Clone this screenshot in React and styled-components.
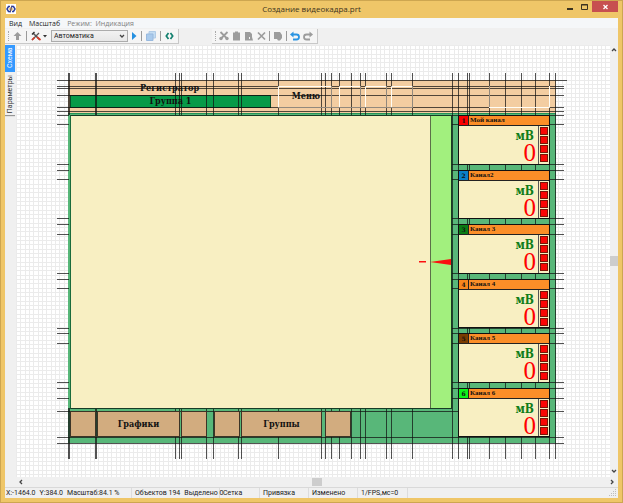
import React from "react";
import styled, { createGlobalStyle } from "styled-components";

const GlobalStyle = createGlobalStyle`
  * { box-sizing: border-box; }
  html, body, #root { height: 100%; margin: 0; }
  body { font: 7px/10px "Open Sans", "Noto Sans", sans-serif; color: #1c1c1c; overflow: hidden; }
  button, select { font: inherit; color: inherit; border: 0; padding: 0; margin: 0; background: none; }
  h1, h2 { margin: 0; font: inherit; }
`;

const Window = styled.div`
  height: 100%;
  display: flex;
  flex-direction: column;
  background: #efc668;
  border: 1px solid #cda650;
  padding: 0 4px 4px;
`;
const TitleBar = styled.header`
  flex: none;
  height: 17px;
  display: grid;
  grid-template-columns: 1fr auto 1fr;
`;
const Title = styled.h1`
  font-size: 8px;
  line-height: 16px;
  color: #3c3320;
`;
const AppIcon = styled.svg`
  width: 10px;
  height: 10px;
  margin: 3px 0 0 1px;
`;
const WindowButtons = styled.div`
  display: flex;
  justify-content: flex-end;
  align-items: flex-start;
`;
const WindowButton = styled.button`
  width: ${(p) => (p.$close ? 26 : 15)}px;
  height: 11px;
  background: ${(p) => (p.$close ? "#c75050" : "transparent")};
  svg { display: block; margin: 0 auto; }
`;
const Client = styled.main`
  flex: 1;
  min-height: 0;
  display: flex;
  flex-direction: column;
  background: #f0f0f0;
`;
const MenuBar = styled.nav`
  flex: none;
  height: 10px;
  display: flex;
  gap: 7px;
  padding: 0 4px;
  background: #f5f7f9;
`;
const MenuItem = styled.button`
  line-height: 11px;
  white-space: pre;
  &:disabled { color: #808080; }
`;
const ToolRow = styled.div`
  flex: none;
  height: 17px;
  display: flex;
  align-items: center;
  gap: 33px;
  padding-bottom: 1px;
`;
const Toolbar = styled.div`
  height: 15px;
  display: flex;
  align-items: center;
  gap: ${(p) => (p.$wide ? 4 : 3)}px;
  padding: 0 4px 0 3px;
  background: #f5f5f5;
  border-right: 1px solid #c8c8c8;
  border-bottom: 1px solid #c8c8c8;
  &::before { content: ""; height: 10px; border-left: 1px dotted #aaa; }
`;
const Divider = styled.span`
  height: 10px;
  border-left: 1px solid #9a9a9a;
`;
const Tool = styled.button`
  display: flex;
  color: ${(p) => p.$color || "#9c9c9c"};
`;
const ModeSelect = styled.select`
  width: 77px;
  height: 12px;
  appearance: none;
  border: 1px solid #acacac;
  padding: 0 2px;
  color: #222;
  font-family: Roboto, sans-serif;
  line-height: 10px;
  background: linear-gradient(#f2f2f2, #e7e7e7);
`;
const SelectBox = styled.label`
  display: flex;
  align-items: center;
  svg { margin-left: -9px; margin-right: 2px; pointer-events: none; }
`;
const Work = styled.div`
  flex: 1;
  min-height: 0;
  display: grid;
  grid-template-columns: 11px 1fr 8px;
  grid-template-rows: 1fr 10px;
`;
const SideTabs = styled.div`
  display: flex;
  flex-direction: column;
  align-items: flex-start;
  gap: 1px;
`;
const SideTab = styled.button`
  writing-mode: vertical-rl;
  transform: rotate(180deg);
  width: 10px;
  line-height: 9px;
  padding: 2px 0;
  font-family: Roboto, sans-serif;
  color: ${(p) => (p.$active ? "#fff" : "#333")};
  min-height: ${(p) => (p.$active ? 27 : 36)}px;
  text-align: center;
  background: ${(p) => (p.$active ? "#3399ff" : "#f0f0f0")};
  border-top: 1px solid ${(p) => (p.$active ? "#3399ff" : "#888")};
`;
const Canvas = styled.div`
  overflow: hidden;
  background-color: #fff;
  background-image:
    linear-gradient(90deg, #ebebeb 1px, transparent 1px 4px, #ebebeb 4px 5px, transparent 5px 9px, #ebebeb 9px 10px, transparent 10px),
    linear-gradient(#ebebeb 1px, transparent 1px 4px, #ebebeb 4px 5px, transparent 5px 9px, #ebebeb 9px 10px, transparent 10px);
  background-size: 13px 13px;
  padding: 27px 0 0 40px;
`;
const VScroll = styled.div`
  display: flex;
  flex-direction: column;
  align-items: center;
  justify-content: space-between;
  padding: 2px 0 3px;
`;
const HScroll = styled.div`
  grid-column: 2 / 4;
  display: flex;
  align-items: center;
  justify-content: space-between;
  padding: 0 3px 0 2px;
`;
const Thumb = styled.span`
  width: ${(p) => (p.$vertical ? 8 : 10)}px;
  height: ${(p) => (p.$vertical ? 10 : 8)}px;
  background: #cdcdcd;
`;
const StatusBar = styled.footer`
  flex: none;
  height: 11px;
  display: flex;
  border-top: 1px solid #d9d9d9;
  font-family: Roboto, sans-serif;
  svg { margin: 1px 1px 0 auto; }
`;
const Status = styled.span`
  width: ${(p) => p.$w}px;
  white-space: pre;
  border-right: 1px solid #dcdcdc;
  padding-left: ${(p) => (p.$first ? 1 : 3)}px;
  display: flex;
  gap: 4px;
`;

const Stage = styled.div`
  position: relative;
  width: 512px;
  padding: 8px 12px 16px;
  font-family: "DejaVu Serif", "Noto Serif", serif;
  font-weight: bold;
  color: #111;
`;
const Guides = styled.svg`
  position: absolute;
  inset: 0;
  z-index: 1;
  pointer-events: none;
`;
const Scheme = styled.div`
  width: 488px;
  background: #58b779;
`;
const SchemeHeader = styled.div`
  height: 34px;
  display: grid;
  grid-template-columns: 203px 70px;
  background: #f3cda1;
  border-bottom: 1px solid #24945a;
  font-family: "DejaVu Serif Condensed", "DejaVu Serif", serif;
  font-size: 9px;
  text-align: center;
`;
const Recorder = styled.div`
  height: 15px;
  padding-top: 2px;
  line-height: 12px;
`;
const GroupName = styled.div`
  margin-left: 2px;
  height: 13px;
  line-height: 11px;
  background: #079a48;
  border: 1px solid #064f27;
`;
const MenuLabel = styled.div`
  line-height: 33px;
`;
const Body = styled.div`
  position: relative;
  z-index: 2;
  display: grid;
  grid-template-columns: 382px 92px;
  gap: 6px;
  padding: 1px 0 6px 2px;
`;
const Left = styled.div`
  display: flex;
  flex-direction: column;
  gap: 2px;
`;
const Chart = styled.div`
  height: 294px;
  display: grid;
  grid-template-columns: 1fr 21px;
  background: #f8efc2;
  border: 1px solid #173c25;
  border-left-color: #1b6b3b;
`;
const Scale = styled.div`
  background: #a2f07e;
  border-left: 1px solid #5c7048;
  display: flex;
  align-items: center;
  justify-content: flex-end;
  svg { flex: none; }
`;
const Buttons = styled.div`
  display: flex;
`;
const PanelButton = styled.button`
  height: 26px;
  width: ${(p) => p.$w}px;
  margin-right: ${(p) => p.$gap || 0}px;
  font: bold 9px/12px "DejaVu Serif Condensed", "DejaVu Serif", serif;
  background: #d2ac7f;
  border: 1px solid #3c3426;
`;
const Channels = styled.div`
  display: grid;
  grid-template-rows: repeat(6, 1fr);
  gap: 5px;
`;
const Card = styled.section`
  display: grid;
  grid-template-rows: 10px 1fr;
  border: 1px solid #111;
  background: #f8efc2;
`;
const CardHead = styled.div`
  display: grid;
  grid-template-columns: 10px 1fr;
  background: #fb8e28;
  border-bottom: 1px solid #222;
  font-size: 6px;
  line-height: 9px;
`;
const Index = styled.span`
  background: ${(p) => p.$color};
  border-right: 1px solid #222;
  text-align: center;
`;
const ChannelName = styled.h2`
  padding-left: 1px;
  font-family: "Liberation Serif", serif;
  font-size: 7px;
  line-height: 9px;
  font-weight: bold;
`;
const CardBody = styled.div`
  display: grid;
  grid-template-columns: 1fr 11px;
`;
const Reading = styled.div`
  display: flex;
  flex-direction: column;
  align-items: flex-end;
  padding: 4px 2px 0 0;
`;
const Unit = styled.span`
  font: bold 12px/13px "DejaVu Serif Condensed", "DejaVu Serif", serif;
  color: #107c18;
  padding-right: 2px;
`;
const Value = styled.span`
  font: 25px/20px "Liberation Serif", serif;
  color: #ff0000;
`;
const Lamps = styled.div`
  border-left: 1px solid #555;
  display: flex;
  flex-direction: column;
  align-items: center;
  gap: 1px;
  padding-top: 1px;
`;
const Lamp = styled.span`
  width: 8px;
  height: 8px;
  background: #fb0505;
  border: 1px solid #7a1408;
`;

const channels = [
  { color: "#fb0000", name: "Мой канал" },
  { color: "#0a80c8", name: "Канал2" },
  { color: "#0a7c14", name: "Канал 3" },
  { color: "#f7861c", name: "Канал 4" },
  { color: "#7a3c00", name: "Канал 5" },
  { color: "#0cf51c", name: "Канал 6" },
];
const panelButtons = [
  { w: 26, gap: 1 }, { w: 83, gap: 1, text: "Графики" }, { w: 26, gap: 7 },
  { w: 26, gap: 1 }, { w: 81, gap: 3, text: "Группы" }, { w: 26 },
];
const columns = [68, 69, 95, 96, 175, 179, 181, 206, 213, 238, 241, 278, 321, 325, 331, 339, 351, 360, 365, 386, 391, 412, 452, 458, 467, 469, 489, 505, 521, 535, 549, 555];
const headRows = [80, 86, 88, 95, 107, 111];
const cardRows = [115, 124, 164, 170, 179, 218, 224, 234, 273, 279, 288, 328, 333, 343, 382, 388, 398];

function GuideLines() {
  const h = (y, x1, x2) => `M${x1} ${y + 0.5}H${x2}`;
  const v = (x, y1, y2) => `M${x + 0.5} ${y1}V${y2}`;
  const dark = [
    ...columns.map((x) => v(x, 73, 115) + v(x, 408, 459)),
    ...columns.filter((x) => x > 450).map((x) => v(x, 115, 408)),
    ...headRows.map((y) => h(y, 57, y === 80 ? 567 : 564)),
    ...cardRows.map((y) => h(y, 57, 69) + h(y, 452, 564)),
    ...[411, 437, 443].map((y) => h(y, 57, 564)),
  ].join("");
  return (
    <Guides viewBox="56 72 512 387" aria-hidden="true" fill="none">
      <path d={dark} stroke="#111" strokeOpacity=".72" />
      <path d="M331.5 86V107M360.5 86V107M386.5 86V107M412.5 86V107M489.5 86V107M278 107.5H413" stroke="#92897d" />
      <path d="M278.5 107V86.500H331M339.5 107V86.500H360M365.500 107V86.500H386M391.500 107V86.500H412M489 107.500H549.500V86" stroke="#fffdf5" />
    </Guides>
  );
}

const Icon = ({ w = 9, children }) => (
  <svg width={w} height="10" viewBox={`0 0 ${w} 10`} fill="currentColor">{children}</svg>
);
const Chevron = ({ d }) => (
  <svg width="6" height="6" viewBox="0 0 6 6" fill="none" stroke="#444" strokeWidth="1.3"><path d={d} /></svg>
);

export default function App() {
  return (
    <>
      <GlobalStyle />
      <Window>
        <TitleBar>
          <AppIcon viewBox="0 0 10 10">
            <rect width="10" height="10" fill="#fff" />
            <path d="M4 2.500H2.500L1 5l1.500 2.500H4M6 2.500h1.500L9 5 7.500 7.500H6" fill="none" stroke="#2d3f9c" strokeWidth="1.500" />
            <path d="M3 5h4M5 3v4" stroke="#e2a52c" />
            <path d="M5.800 1.500 4.200 8.500" stroke="#3a3c88" />
          </AppIcon>
          <Title>Создание видеокадра.prt</Title>
          <WindowButtons>
            <WindowButton aria-label="Свернуть"><svg width="9" height="11"><path d="M2 8h6" stroke="#3c3320" strokeWidth="2" /></svg></WindowButton>
            <WindowButton aria-label="Развернуть"><svg width="9" height="11"><path d="M1.500 3.500h6v5h-6zM1 4h7" fill="none" stroke="#3c3320" /></svg></WindowButton>
            <WindowButton $close aria-label="Закрыть"><svg width="9" height="11"><path d="m2.500 4 4 4m0-4-4 4" stroke="#fff" strokeWidth="1.300" /></svg></WindowButton>
          </WindowButtons>
        </TitleBar>
        <Client>
          <MenuBar>
            <MenuItem>Вид</MenuItem>
            <MenuItem>Масштаб</MenuItem>
            <MenuItem disabled>Режим:  Индикация</MenuItem>
          </MenuBar>
          <ToolRow>
            <Toolbar $wide>
              <Tool aria-label="Вверх"><Icon><path d="M4.500 1 8.500 5H6v4H3V5H.5z" /></Icon></Tool>
              <Divider />
              <Tool aria-label="Инструменты" $color="#333">
                <Icon w={16}>
                  <path d="M2 2 8.500 8.500" stroke="#555" strokeWidth="1.500" />
                  <path d="M1 3.500 3.500 1" stroke="#333" strokeWidth="1.500" />
                  <path d="M8 2 1 9" stroke="#555" strokeWidth="1.200" />
                  <path d="m6 6 3.500 3M3.500 6.500 1 9" stroke="#d33a28" strokeWidth="1.700" />
                  <path d="M12 4h4l-2 2.500z" />
                </Icon>
              </Tool>
              <SelectBox>
                <ModeSelect aria-label="Режим"><option>Автоматика</option></ModeSelect>
                <Chevron d="M1 2l2 2 2-2" />
              </SelectBox>
              <Tool aria-label="Запуск" $color="#2590e0"><Icon w={6}><path d="M1 1 5.500 5 1 9z" /></Icon></Tool>
              <Divider />
              <Tool aria-label="Слои">
                <Icon w={10}>
                  <path d="M3 .5h6.500v6.500H3z" fill="#c3dcf2" stroke="#b0cbe6" />
                  <path d="M.5 3H7v6.500H.5z" fill="#a9caec" stroke="#98b9de" />
                </Icon>
              </Tool>
              <Divider />
              <Tool aria-label="Код" $color="#13806f">
                <Icon><path d="M3.500 2 1.300 5l2.200 3M5.500 2l2.200 3-2.200 3" fill="none" stroke="currentColor" strokeWidth="1.700" /></Icon>
              </Tool>
            </Toolbar>
            <Toolbar>
              <Tool aria-label="Вырезать"><Icon w={10}><path d="m1.500 1 6 6M8.500 1l-6 6" stroke="currentColor" strokeWidth="1.800" /><circle cx="2" cy="7.500" r="1.700" /><circle cx="8" cy="7.500" r="1.700" /></Icon></Tool>
              <Tool aria-label="Копировать"><Icon><path d="M1 1.500h2V.5h3v1h2v8H1z" /></Icon></Tool>
              <Tool aria-label="Вставить"><Icon w={10}><path d="M1 1h5l2 2v3l1 3.500H1z" /><path d="M5.500 8V6" stroke="#f5f5f5" /></Icon></Tool>
              <Tool aria-label="Удалить"><Icon><path d="m1 1.500 7 7m0-7-7 7" stroke="currentColor" strokeWidth="1.700" /></Icon></Tool>
              <Divider />
              <Tool aria-label="Свойства"><Icon w={10}><path d="M1 1h6l2 3v3L7 9.500H5L4 8H1z" /></Icon></Tool>
              <Divider />
              <Tool aria-label="Отменить" $color="#2a94e2"><Icon w={10}><path d="M2 3.500h4.500a2.500 2.500 0 0 1 0 5H3" fill="none" stroke="currentColor" strokeWidth="1.800" /><path d="M0 3.500 3.500.5v6z" /></Icon></Tool>
              <Tool aria-label="Вернуть"><Icon w={10}><path d="M8 3.500H3.500a2.500 2.500 0 0 0 0 5H7" fill="none" stroke="currentColor" strokeWidth="1.800" /><path d="M10 3.500 6.500.5v6z" /></Icon></Tool>
            </Toolbar>
          </ToolRow>
          <Work>
            <SideTabs>
              <SideTab $active>Схема</SideTab>
              <SideTab>Параметры</SideTab>
            </SideTabs>
            <Canvas>
              <Stage>
                <GuideLines />
                <Scheme>
                  <SchemeHeader>
                    <div>
                      <Recorder>Регистратор</Recorder>
                      <GroupName>Группа 1</GroupName>
                    </div>
                    <MenuLabel>Меню</MenuLabel>
                  </SchemeHeader>
                  <Body>
                    <Left>
                      <Chart>
                        <span />
                        <Scale>
                          <svg width="32" height="8" viewBox="0 0 32 8" fill="#fb1010"><path d="M11 4 32 1v6zM0 3h7v1.500H0z" /></svg>
                        </Scale>
                      </Chart>
                      <Buttons>
                        {panelButtons.map((b, i) => (
                          <PanelButton key={i} $w={b.w} $gap={b.gap}>{b.text}</PanelButton>
                        ))}
                      </Buttons>
                    </Left>
                    <Channels>
                      {channels.map((c, i) => (
                        <Card key={c.name}>
                          <CardHead>
                            <Index $color={c.color}>{i + 1}</Index>
                            <ChannelName>{c.name}</ChannelName>
                          </CardHead>
                          <CardBody>
                            <Reading>
                              <Unit>мВ</Unit>
                              <Value>0</Value>
                            </Reading>
                            <Lamps><Lamp /><Lamp /><Lamp /><Lamp /></Lamps>
                          </CardBody>
                        </Card>
                      ))}
                    </Channels>
                  </Body>
                </Scheme>
              </Stage>
            </Canvas>
            <VScroll>
              <Chevron d="M1 4l2-2 2 2" />
              <Thumb $vertical />
              <Chevron d="M1 2l2 2 2-2" />
            </VScroll>
            <span />
            <HScroll>
              <Chevron d="M4 1 2 3l2 2" />
              <Thumb />
              <Chevron d="M2 1l2 2-2 2" />
            </HScroll>
          </Work>
          <StatusBar>
            <Status $w={127} $first><span>X:-1464.0</span><span>Y:384.0</span><span>Масштаб:84.1 %</span></Status>
            <Status $w={88}><span>Объектов 194</span><span>Выделено 0</span></Status>
            <Status $w={40}>Сетка</Status>
            <Status $w={49}>Привязка</Status>
            <Status $w={49}>Изменено</Status>
            <Status $w={50}>1/FPS,мс=0</Status>
            <svg width="8" height="8" viewBox="0 0 8 8" fill="#bdbdbd"><path d="M6 0h1v1H6zM4 2h1v1H4zM6 2h1v1H6zM2 4h1v1H2zM4 4h1v1H4zM6 4h1v1H6zM0 6h1v1H0zM2 6h1v1H2zM4 6h1v1H4zM6 6h1v1H6z" /></svg>
          </StatusBar>
        </Client>
      </Window>
    </>
  );
}
